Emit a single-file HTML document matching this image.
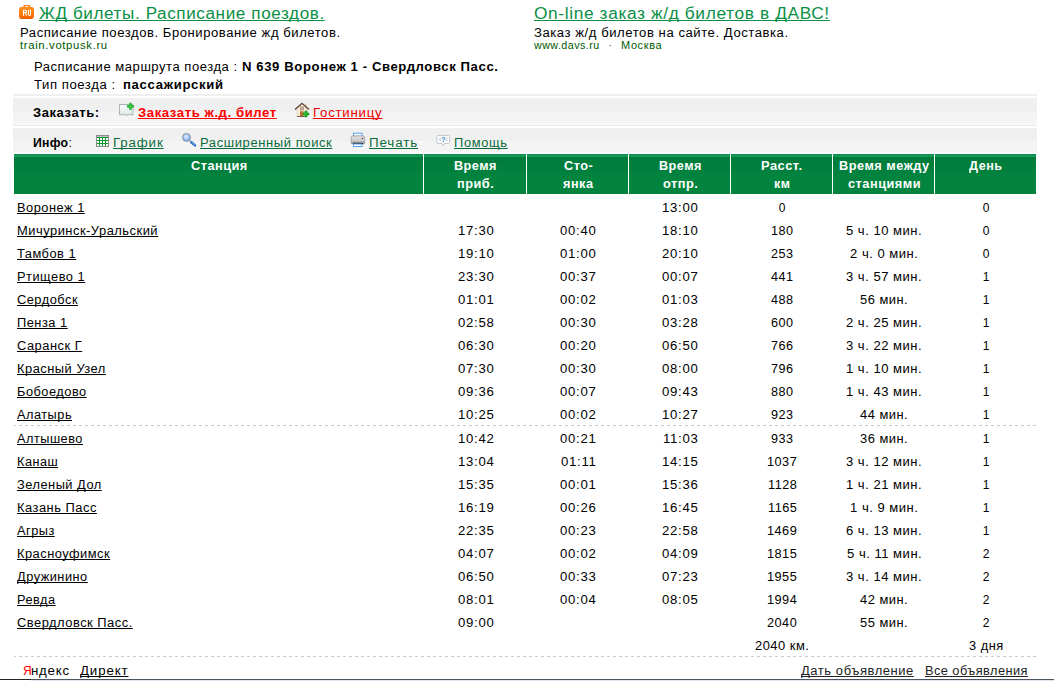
<!DOCTYPE html>
<html><head><meta charset="utf-8"><title>Расписание поезда</title>
<style>
html,body{margin:0;padding:0;background:#fff;width:1054px;height:682px;overflow:hidden;position:relative}
body{font-family:"Liberation Sans",sans-serif;color:#000}
.t{position:absolute;white-space:nowrap;line-height:normal;transform-origin:0 0;text-decoration-skip-ink:none}
.b{position:absolute}
</style></head><body>
<!-- RU icon -->
<svg class="b" style="left:18px;top:4px" width="18" height="16" viewBox="0 0 18 16">
 <defs><linearGradient id="og" x1="0" y1="0" x2="0" y2="1"><stop offset="0" stop-color="#ff8c1c"/><stop offset="0.7" stop-color="#fb7608"/><stop offset="1" stop-color="#ee5a00"/></linearGradient></defs>
 <path d="M5.2 3.2L5.8 1h6.2l0.7 2.2h-1.6l-0.3-1H6.9l-0.2 1z" fill="#ff7a10"/>
 <rect x="1" y="3" width="15" height="12" rx="2.4" fill="url(#og)"/>
 <path d="M5.5 11.8V6.3H7.4Q8.5 6.3 8.5 7.5Q8.5 8.6 7.4 8.6H5.5M7.4 8.6L8.6 11.8M10.5 5.8V10.6Q10.5 11.5 11.5 11.5Q12.5 11.5 12.5 10.6V5.8" fill="none" stroke="#fff" stroke-width="1.1"/>
</svg>
<!-- bands -->
<div class="b" style="left:13px;top:94px;width:1024px;height:2px;background:#efefef"></div>
<div class="b" style="left:13px;top:98px;width:1024px;height:14px;background:#f0f0f0"></div>
<div class="b" style="left:13px;top:112px;width:1024px;height:11px;background:#f4f4f4"></div>
<div class="b" style="left:13px;top:123px;width:1024px;height:2px;background:#f7f7f7"></div>
<div class="b" style="left:13px;top:125px;width:1024px;height:1px;background:#eaeaea"></div>
<div class="b" style="left:13px;top:128px;width:1024px;height:13px;background:#f0f0f0"></div>
<div class="b" style="left:13px;top:141px;width:1024px;height:11px;background:#f4f4f4"></div>
<div class="b" style="left:13px;top:152px;width:1024px;height:1px;background:#f7f7f7"></div>
<!-- header -->
<div class="b" style="left:14px;top:154px;width:1022px;height:40px;background:linear-gradient(#0a8c47 0 1px,#16995a 1px 3px,#007b3b 3px,#02843f 60%,#02843f)"></div>
<div class="b" style="left:423px;top:154px;width:1px;height:40px;background:#fff"></div>
<div class="b" style="left:526px;top:154px;width:1px;height:40px;background:#fff"></div>
<div class="b" style="left:628px;top:154px;width:1px;height:40px;background:#fff"></div>
<div class="b" style="left:730px;top:154px;width:1px;height:40px;background:#fff"></div>
<div class="b" style="left:832px;top:154px;width:1px;height:40px;background:#fff"></div>
<div class="b" style="left:934px;top:154px;width:1px;height:40px;background:#fff"></div>
<!-- dashed lines -->
<div class="b" style="left:14px;top:425px;width:1022px;height:1px;background:repeating-linear-gradient(90deg,#c8c8c8 0 3px,transparent 3px 6px);background-position:-1px 0"></div>
<div class="b" style="left:14px;top:656px;width:1022px;height:1px;background:repeating-linear-gradient(90deg,#c8c8c8 0 3px,transparent 3px 6px);background-position:-1px 0"></div>
<!-- bottom line -->
<div class="b" style="left:0;top:679px;width:31px;height:1px;background:#262626"></div>
<div class="b" style="left:31px;top:679px;width:1023px;height:1px;background:#4b5661"></div>
<div class="b" style="left:31px;top:680px;width:1023px;height:1px;background:#dde5ee"></div>
<!-- ticket icon -->
<svg class="b" style="left:118px;top:102px" width="18" height="16" viewBox="0 0 18 16">
 <defs><linearGradient id="tg" x1="0" y1="0" x2="0" y2="1"><stop offset="0" stop-color="#fbfdfd"/><stop offset="1" stop-color="#dce6e6"/></linearGradient></defs>
 <path d="M1.5 2.5h13.5v10.3h-2.2q-1-1.3-2 0.3h-3.6q-1-1.6-2-0.3h-3.7z" fill="url(#tg)" stroke="#a2adaf" stroke-width="0.9"/>
 <path d="M11.6 1.2h1.7v2.3h2.3v1.7h-2.3v2.3h-1.7V5.2H9.3V3.5h2.3z" fill="#30d840" stroke="#139c22" stroke-width="0.7"/>
</svg>
<!-- house icon -->
<svg class="b" style="left:294px;top:102px" width="17" height="16" viewBox="0 0 17 16">
 <rect x="11" y="1.5" width="2" height="4" fill="#e8d0b0"/>
 <path d="M3 6.5L8 2.5L13 6.5V14.5H3z" fill="#f6ead8" stroke="#d8c0a0" stroke-width="0.5"/>
 <path d="M1 7.5L8 1.3L15 7.5" fill="none" stroke="#5a4535" stroke-width="1.3"/>
 <rect x="6.5" y="5" width="3" height="3" fill="#a8c4e0" stroke="#b87840" stroke-width="0.7"/>
 <rect x="6" y="9.3" width="3.5" height="5.2" fill="#c07035"/>
 <rect x="3" y="14" width="8" height="1" fill="#7a5a4a"/>
 <path d="M11 9h2v2h2v2h-2v2h-2v-2H9v-2h2z" fill="#22c030" stroke="#108a18" stroke-width="0.6"/>
</svg>
<!-- grid icon -->
<svg class="b" style="left:96px;top:135px" width="13" height="12" viewBox="0 0 13 12" shape-rendering="crispEdges">
 <rect x="0" y="0" width="13" height="12" fill="#8a8a8a"/>
 <rect x="1" y="1" width="11" height="1" fill="#c4bccc"/>
 <rect x="1" y="2" width="11" height="9" fill="#0a9a2a"/>
 <g fill="#fff">
  <rect x="1" y="3" width="2" height="2"/><rect x="4" y="3" width="2" height="2"/><rect x="7" y="3" width="2" height="2"/><rect x="10" y="3" width="2" height="2"/>
  <rect x="1" y="6" width="2" height="2"/><rect x="4" y="6" width="2" height="2"/><rect x="7" y="6" width="2" height="2"/><rect x="10" y="6" width="2" height="2"/>
  <rect x="1" y="9" width="2" height="2"/><rect x="4" y="9" width="2" height="2"/><rect x="7" y="9" width="2" height="2"/><rect x="10" y="9" width="2" height="2"/>
 </g>
</svg>
<!-- magnifier -->
<svg class="b" style="left:180px;top:131px" width="18" height="17" viewBox="0 0 18 17">
 <defs><radialGradient id="lg" cx="0.45" cy="0.4" r="0.6"><stop offset="0" stop-color="#e8f2ff"/><stop offset="0.5" stop-color="#a8ccff"/><stop offset="1" stop-color="#78aef8"/></radialGradient></defs>
 <line x1="9.6" y1="9.6" x2="11" y2="10.8" stroke="#a0a0a0" stroke-width="1.6"/>
 <line x1="11.3" y1="11.2" x2="15" y2="14.4" stroke="#3572cc" stroke-width="2.5" stroke-linecap="round"/>
 <line x1="11.8" y1="11.4" x2="14.4" y2="13.6" stroke="#7aa8ee" stroke-width="0.8" stroke-linecap="round"/>
 <circle cx="6.5" cy="6.4" r="3.9" fill="url(#lg)" stroke="#8c8c8c" stroke-width="1"/>
</svg>
<!-- printer -->
<svg class="b" style="left:350px;top:132px" width="16" height="16" viewBox="0 0 16 16">
 <defs><linearGradient id="pg" x1="0" y1="0" x2="0" y2="1"><stop offset="0" stop-color="#e4e4e4"/><stop offset="0.6" stop-color="#c8c8c8"/><stop offset="1" stop-color="#8a8a8a"/></linearGradient></defs>
 <rect x="3.5" y="1.2" width="8.5" height="3" fill="#fff" stroke="#5aa0ee" stroke-width="1"/>
 <rect x="1.2" y="4" width="13.5" height="8" rx="1.2" fill="url(#pg)" stroke="#8c8c8c" stroke-width="0.6"/>
 <rect x="3" y="10.8" width="10" height="1.2" fill="#222"/>
 <rect x="3.5" y="12" width="8.5" height="2.5" fill="#fff" stroke="#5aa0ee" stroke-width="1"/>
 <circle cx="12.5" cy="6.4" r="0.7" fill="#333"/>
</svg>
<!-- help bubble -->
<svg class="b" style="left:435.6px;top:134.3px" width="15" height="13" viewBox="0 0 15 13">
 <path d="M2 1.5h10.5q1.2 0 1.2 1.2v5.6q0 1.2-1.2 1.2H8.8L7.3 11.6L5.8 9.5H2q-1.2 0-1.2-1.2V2.7q0-1.2 1.2-1.2z" fill="#f8fafc" stroke="#c2cad2" stroke-width="1"/>
 <rect x="3" y="4" width="2" height="3" fill="#d8dde2"/><rect x="9.5" y="4" width="2" height="3" fill="#d8dde2"/>
 <text x="7.3" y="8.3" font-family="Liberation Sans" font-size="7.5" font-weight="700" fill="#4a8ed0" text-anchor="middle">?</text>
</svg>
<span class='t' style='left:39.40px;top:4.90px;font-size:16px;transform:scaleX(1.0691);color:#0a8f45;letter-spacing:0.56px;text-decoration:underline;'>ЖД билеты. Расписание поездов.</span>
<span class='t' style='left:19.70px;top:26.00px;font-size:12px;transform:scaleX(1.0882);letter-spacing:0.51px;'>Расписание поездов. Бронирование жд билетов.</span>
<span class='t' style='left:19.70px;top:40.40px;font-size:10px;transform:scaleX(1.1382);color:#005a00;letter-spacing:0.55px;'>train.votpusk.ru</span>
<span class='t' style='left:534.30px;top:4.50px;font-size:16px;transform:scaleX(1.0800);color:#0a8f45;letter-spacing:0.59px;text-decoration:underline;'>On-line заказ ж/д билетов в ДАВС!</span>
<span class='t' style='left:534.30px;top:25.50px;font-size:12px;transform:scaleX(1.0920);letter-spacing:0.50px;'>Заказ ж/д билетов на сайте. Доставка.</span>
<span class='t' style='left:534.30px;top:40.40px;font-size:10px;transform:scaleX(1.0746);color:#005a00;letter-spacing:0.39px;'>www.davs.ru</span>
<span class='t' style='left:608.50px;top:40.40px;font-size:10px;color:#005a00;'>·</span>
<span class='t' style='left:620.60px;top:40.40px;font-size:10px;transform:scaleX(1.0959);color:#005a00;letter-spacing:0.58px;'>Москва</span>
<span class='t' style='left:33.70px;top:59.80px;font-size:12px;transform:scaleX(1.0845);letter-spacing:0.50px;'>Расписание маршрута поезда :</span>
<span class='t' style='left:242.00px;top:59.80px;font-size:12px;transform:scaleX(1.0929);font-weight:700;letter-spacing:0.55px;'>N 639 Воронеж 1 - Свердловск Пасс.</span>
<span class='t' style='left:33.70px;top:77.70px;font-size:12px;transform:scaleX(1.0925);letter-spacing:0.52px;'>Тип поезда :</span>
<span class='t' style='left:123.40px;top:77.70px;font-size:12px;transform:scaleX(1.0910);font-weight:700;letter-spacing:0.64px;'>пассажирский</span>
<span class='t' style='left:33.20px;top:105.90px;font-size:12px;transform:scaleX(1.0830);font-weight:700;letter-spacing:0.53px;'>Заказать:</span>
<span class='t' style='left:138.00px;top:106.00px;font-size:12px;transform:scaleX(1.0912);font-weight:700;color:#ff0000;letter-spacing:0.54px;text-decoration:underline;'>Заказать ж.д. билет</span>
<span class='t' style='left:313.40px;top:106.00px;font-size:12px;transform:scaleX(1.1059);color:#ee0000;letter-spacing:0.67px;text-decoration:underline;'>Гостиницу</span>
<span class='t' style='left:33.20px;top:136.20px;font-size:12px;transform:scaleX(1.0223);font-weight:700;letter-spacing:0.24px;'>Инфо</span>
<span class='t' style='left:68.50px;top:136.20px;font-size:12px;'>:</span>
<span class='t' style='left:113.00px;top:136.20px;font-size:12px;transform:scaleX(1.1075);color:#0b6b3a;letter-spacing:0.78px;text-decoration:underline;'>График</span>
<span class='t' style='left:200.00px;top:136.20px;font-size:12px;transform:scaleX(1.0835);color:#0b6b3a;letter-spacing:0.54px;text-decoration:underline;'>Расширенный поиск</span>
<span class='t' style='left:369.00px;top:136.20px;font-size:12px;transform:scaleX(1.1134);color:#0b6b3a;letter-spacing:0.78px;text-decoration:underline;'>Печать</span>
<span class='t' style='left:454.00px;top:136.20px;font-size:12px;transform:scaleX(1.0732);color:#0b6b3a;letter-spacing:0.62px;text-decoration:underline;'>Помощь</span>
<span class='t' style='left:190.85px;top:158.90px;font-size:12px;transform:scaleX(1.0609);font-weight:700;color:#fff;letter-spacing:0.47px;'>Станция</span>
<span class='t' style='left:454.28px;top:158.90px;font-size:12px;transform:scaleX(1.0535);font-weight:700;color:#fff;letter-spacing:0.47px;'>Время</span>
<span class='t' style='left:457.12px;top:176.50px;font-size:12px;transform:scaleX(1.0631);font-weight:700;color:#fff;letter-spacing:0.47px;'>приб.</span>
<span class='t' style='left:563.61px;top:158.90px;font-size:12px;transform:scaleX(1.0607);font-weight:700;color:#fff;letter-spacing:0.47px;'>Сто-</span>
<span class='t' style='left:563.00px;top:176.50px;font-size:12px;transform:scaleX(1.0578);font-weight:700;color:#fff;letter-spacing:0.47px;'>янка</span>
<span class='t' style='left:658.78px;top:158.90px;font-size:12px;transform:scaleX(1.0535);font-weight:700;color:#fff;letter-spacing:0.47px;'>Время</span>
<span class='t' style='left:662.55px;top:176.50px;font-size:12px;transform:scaleX(1.0671);font-weight:700;color:#fff;letter-spacing:0.47px;'>отпр.</span>
<span class='t' style='left:761.45px;top:158.90px;font-size:12px;transform:scaleX(1.0714);font-weight:700;color:#fff;letter-spacing:0.47px;'>Расст.</span>
<span class='t' style='left:774.04px;top:176.50px;font-size:12px;transform:scaleX(1.0360);font-weight:700;color:#fff;letter-spacing:0.48px;'>км</span>
<span class='t' style='left:838.94px;top:158.90px;font-size:12px;transform:scaleX(1.0632);font-weight:700;color:#fff;letter-spacing:0.47px;'>Время между</span>
<span class='t' style='left:847.73px;top:176.50px;font-size:12px;transform:scaleX(1.0630);font-weight:700;color:#fff;letter-spacing:0.47px;'>станциями</span>
<span class='t' style='left:969.47px;top:158.90px;font-size:12px;transform:scaleX(1.0517);font-weight:700;color:#fff;letter-spacing:0.48px;'>День</span>
<span class='t' style='left:17.20px;top:200.60px;font-size:12px;transform:scaleX(1.0687);letter-spacing:0.47px;text-decoration:underline;'>Воронеж 1</span>
<span class='t' style='left:662.14px;top:200.60px;font-size:12px;transform:scaleX(1.0964);letter-spacing:0.64px;'>13:00</span>
<span class='t' style='left:778.66px;top:200.60px;font-size:12px;'>0</span>
<span class='t' style='left:982.66px;top:200.60px;font-size:12px;'>0</span>
<span class='t' style='left:17.20px;top:223.60px;font-size:12px;transform:scaleX(1.0741);letter-spacing:0.47px;text-decoration:underline;'>Мичуринск-Уральский</span>
<span class='t' style='left:457.64px;top:223.60px;font-size:12px;transform:scaleX(1.0964);letter-spacing:0.64px;'>17:30</span>
<span class='t' style='left:560.14px;top:223.60px;font-size:12px;transform:scaleX(1.0964);letter-spacing:0.64px;'>00:40</span>
<span class='t' style='left:662.14px;top:223.60px;font-size:12px;transform:scaleX(1.0964);letter-spacing:0.64px;'>18:10</span>
<span class='t' style='left:770.96px;top:223.60px;font-size:12px;transform:scaleX(1.0525);letter-spacing:0.48px;'>180</span>
<span class='t' style='left:846.19px;top:223.60px;font-size:12px;transform:scaleX(1.0866);letter-spacing:0.46px;'>5 ч. 10 мин.</span>
<span class='t' style='left:982.66px;top:223.60px;font-size:12px;'>0</span>
<span class='t' style='left:17.20px;top:246.60px;font-size:12px;transform:scaleX(1.0693);letter-spacing:0.47px;text-decoration:underline;'>Тамбов 1</span>
<span class='t' style='left:457.64px;top:246.60px;font-size:12px;transform:scaleX(1.0964);letter-spacing:0.64px;'>19:10</span>
<span class='t' style='left:560.14px;top:246.60px;font-size:12px;transform:scaleX(1.0964);letter-spacing:0.64px;'>01:00</span>
<span class='t' style='left:662.14px;top:246.60px;font-size:12px;transform:scaleX(1.0964);letter-spacing:0.64px;'>20:10</span>
<span class='t' style='left:770.96px;top:246.60px;font-size:12px;transform:scaleX(1.0525);letter-spacing:0.48px;'>253</span>
<span class='t' style='left:850.03px;top:246.60px;font-size:12px;transform:scaleX(1.0879);letter-spacing:0.46px;'>2 ч. 0 мин.</span>
<span class='t' style='left:982.66px;top:246.60px;font-size:12px;'>0</span>
<span class='t' style='left:17.20px;top:269.60px;font-size:12px;transform:scaleX(1.0683);letter-spacing:0.47px;text-decoration:underline;'>Ртищево 1</span>
<span class='t' style='left:457.64px;top:269.60px;font-size:12px;transform:scaleX(1.0964);letter-spacing:0.64px;'>23:30</span>
<span class='t' style='left:560.14px;top:269.60px;font-size:12px;transform:scaleX(1.0964);letter-spacing:0.64px;'>00:37</span>
<span class='t' style='left:662.14px;top:269.60px;font-size:12px;transform:scaleX(1.0964);letter-spacing:0.64px;'>00:07</span>
<span class='t' style='left:770.96px;top:269.60px;font-size:12px;transform:scaleX(1.0525);letter-spacing:0.48px;'>441</span>
<span class='t' style='left:846.19px;top:269.60px;font-size:12px;transform:scaleX(1.0866);letter-spacing:0.46px;'>3 ч. 57 мин.</span>
<span class='t' style='left:982.66px;top:269.60px;font-size:12px;'>1</span>
<span class='t' style='left:17.20px;top:292.60px;font-size:12px;transform:scaleX(1.0668);letter-spacing:0.47px;text-decoration:underline;'>Сердобск</span>
<span class='t' style='left:457.64px;top:292.60px;font-size:12px;transform:scaleX(1.0964);letter-spacing:0.64px;'>01:01</span>
<span class='t' style='left:560.14px;top:292.60px;font-size:12px;transform:scaleX(1.0964);letter-spacing:0.64px;'>00:02</span>
<span class='t' style='left:662.14px;top:292.60px;font-size:12px;transform:scaleX(1.0964);letter-spacing:0.64px;'>01:03</span>
<span class='t' style='left:770.96px;top:292.60px;font-size:12px;transform:scaleX(1.0525);letter-spacing:0.48px;'>488</span>
<span class='t' style='left:860.16px;top:292.60px;font-size:12px;transform:scaleX(1.0739);letter-spacing:0.47px;'>56 мин.</span>
<span class='t' style='left:982.66px;top:292.60px;font-size:12px;'>1</span>
<span class='t' style='left:17.20px;top:315.60px;font-size:12px;transform:scaleX(1.0696);letter-spacing:0.47px;text-decoration:underline;'>Пенза 1</span>
<span class='t' style='left:457.64px;top:315.60px;font-size:12px;transform:scaleX(1.0964);letter-spacing:0.64px;'>02:58</span>
<span class='t' style='left:560.14px;top:315.60px;font-size:12px;transform:scaleX(1.0964);letter-spacing:0.64px;'>00:30</span>
<span class='t' style='left:662.14px;top:315.60px;font-size:12px;transform:scaleX(1.0964);letter-spacing:0.64px;'>03:28</span>
<span class='t' style='left:770.96px;top:315.60px;font-size:12px;transform:scaleX(1.0525);letter-spacing:0.48px;'>600</span>
<span class='t' style='left:846.19px;top:315.60px;font-size:12px;transform:scaleX(1.0866);letter-spacing:0.46px;'>2 ч. 25 мин.</span>
<span class='t' style='left:982.66px;top:315.60px;font-size:12px;'>1</span>
<span class='t' style='left:17.20px;top:338.60px;font-size:12px;transform:scaleX(1.0720);letter-spacing:0.47px;text-decoration:underline;'>Саранск Г</span>
<span class='t' style='left:457.64px;top:338.60px;font-size:12px;transform:scaleX(1.0964);letter-spacing:0.64px;'>06:30</span>
<span class='t' style='left:560.14px;top:338.60px;font-size:12px;transform:scaleX(1.0964);letter-spacing:0.64px;'>00:20</span>
<span class='t' style='left:662.14px;top:338.60px;font-size:12px;transform:scaleX(1.0964);letter-spacing:0.64px;'>06:50</span>
<span class='t' style='left:770.96px;top:338.60px;font-size:12px;transform:scaleX(1.0525);letter-spacing:0.48px;'>766</span>
<span class='t' style='left:846.19px;top:338.60px;font-size:12px;transform:scaleX(1.0866);letter-spacing:0.46px;'>3 ч. 22 мин.</span>
<span class='t' style='left:982.66px;top:338.60px;font-size:12px;'>1</span>
<span class='t' style='left:17.20px;top:361.60px;font-size:12px;transform:scaleX(1.0721);letter-spacing:0.47px;text-decoration:underline;'>Красный Узел</span>
<span class='t' style='left:457.64px;top:361.60px;font-size:12px;transform:scaleX(1.0964);letter-spacing:0.64px;'>07:30</span>
<span class='t' style='left:560.14px;top:361.60px;font-size:12px;transform:scaleX(1.0964);letter-spacing:0.64px;'>00:30</span>
<span class='t' style='left:662.14px;top:361.60px;font-size:12px;transform:scaleX(1.0964);letter-spacing:0.64px;'>08:00</span>
<span class='t' style='left:770.96px;top:361.60px;font-size:12px;transform:scaleX(1.0525);letter-spacing:0.48px;'>796</span>
<span class='t' style='left:846.19px;top:361.60px;font-size:12px;transform:scaleX(1.0866);letter-spacing:0.46px;'>1 ч. 10 мин.</span>
<span class='t' style='left:982.66px;top:361.60px;font-size:12px;'>1</span>
<span class='t' style='left:17.20px;top:384.60px;font-size:12px;transform:scaleX(1.0665);letter-spacing:0.47px;text-decoration:underline;'>Бобоедово</span>
<span class='t' style='left:457.64px;top:384.60px;font-size:12px;transform:scaleX(1.0964);letter-spacing:0.64px;'>09:36</span>
<span class='t' style='left:560.14px;top:384.60px;font-size:12px;transform:scaleX(1.0964);letter-spacing:0.64px;'>00:07</span>
<span class='t' style='left:662.14px;top:384.60px;font-size:12px;transform:scaleX(1.0964);letter-spacing:0.64px;'>09:43</span>
<span class='t' style='left:770.96px;top:384.60px;font-size:12px;transform:scaleX(1.0525);letter-spacing:0.48px;'>880</span>
<span class='t' style='left:846.19px;top:384.60px;font-size:12px;transform:scaleX(1.0866);letter-spacing:0.46px;'>1 ч. 43 мин.</span>
<span class='t' style='left:982.66px;top:384.60px;font-size:12px;'>1</span>
<span class='t' style='left:17.20px;top:407.60px;font-size:12px;transform:scaleX(1.0632);letter-spacing:0.47px;text-decoration:underline;'>Алатырь</span>
<span class='t' style='left:457.64px;top:407.60px;font-size:12px;transform:scaleX(1.0964);letter-spacing:0.64px;'>10:25</span>
<span class='t' style='left:560.14px;top:407.60px;font-size:12px;transform:scaleX(1.0964);letter-spacing:0.64px;'>00:02</span>
<span class='t' style='left:662.14px;top:407.60px;font-size:12px;transform:scaleX(1.0964);letter-spacing:0.64px;'>10:27</span>
<span class='t' style='left:770.96px;top:407.60px;font-size:12px;transform:scaleX(1.0525);letter-spacing:0.48px;'>923</span>
<span class='t' style='left:860.16px;top:407.60px;font-size:12px;transform:scaleX(1.0739);letter-spacing:0.47px;'>44 мин.</span>
<span class='t' style='left:982.66px;top:407.60px;font-size:12px;'>1</span>
<span class='t' style='left:17.20px;top:431.60px;font-size:12px;transform:scaleX(1.0610);letter-spacing:0.47px;text-decoration:underline;'>Алтышево</span>
<span class='t' style='left:457.64px;top:431.60px;font-size:12px;transform:scaleX(1.0964);letter-spacing:0.64px;'>10:42</span>
<span class='t' style='left:560.14px;top:431.60px;font-size:12px;transform:scaleX(1.0964);letter-spacing:0.64px;'>00:21</span>
<span class='t' style='left:662.58px;top:431.60px;font-size:12px;transform:scaleX(1.0995);letter-spacing:0.64px;'>11:03</span>
<span class='t' style='left:770.96px;top:431.60px;font-size:12px;transform:scaleX(1.0525);letter-spacing:0.48px;'>933</span>
<span class='t' style='left:860.16px;top:431.60px;font-size:12px;transform:scaleX(1.0739);letter-spacing:0.47px;'>36 мин.</span>
<span class='t' style='left:982.66px;top:431.60px;font-size:12px;'>1</span>
<span class='t' style='left:17.20px;top:454.60px;font-size:12px;transform:scaleX(1.0562);letter-spacing:0.47px;text-decoration:underline;'>Канаш</span>
<span class='t' style='left:457.64px;top:454.60px;font-size:12px;transform:scaleX(1.0964);letter-spacing:0.64px;'>13:04</span>
<span class='t' style='left:560.58px;top:454.60px;font-size:12px;transform:scaleX(1.0995);letter-spacing:0.64px;'>01:11</span>
<span class='t' style='left:662.14px;top:454.60px;font-size:12px;transform:scaleX(1.0964);letter-spacing:0.64px;'>14:15</span>
<span class='t' style='left:767.12px;top:454.60px;font-size:12px;transform:scaleX(1.0584);letter-spacing:0.47px;'>1037</span>
<span class='t' style='left:846.19px;top:454.60px;font-size:12px;transform:scaleX(1.0866);letter-spacing:0.46px;'>3 ч. 12 мин.</span>
<span class='t' style='left:982.66px;top:454.60px;font-size:12px;'>1</span>
<span class='t' style='left:17.20px;top:477.60px;font-size:12px;transform:scaleX(1.0683);letter-spacing:0.47px;text-decoration:underline;'>Зеленый Дол</span>
<span class='t' style='left:457.64px;top:477.60px;font-size:12px;transform:scaleX(1.0964);letter-spacing:0.64px;'>15:35</span>
<span class='t' style='left:560.14px;top:477.60px;font-size:12px;transform:scaleX(1.0964);letter-spacing:0.64px;'>00:01</span>
<span class='t' style='left:662.14px;top:477.60px;font-size:12px;transform:scaleX(1.0964);letter-spacing:0.64px;'>15:36</span>
<span class='t' style='left:767.56px;top:477.60px;font-size:12px;transform:scaleX(1.0605);letter-spacing:0.47px;'>1128</span>
<span class='t' style='left:846.19px;top:477.60px;font-size:12px;transform:scaleX(1.0866);letter-spacing:0.46px;'>1 ч. 21 мин.</span>
<span class='t' style='left:982.66px;top:477.60px;font-size:12px;'>1</span>
<span class='t' style='left:17.20px;top:500.60px;font-size:12px;transform:scaleX(1.0733);letter-spacing:0.47px;text-decoration:underline;'>Казань Пасс</span>
<span class='t' style='left:457.64px;top:500.60px;font-size:12px;transform:scaleX(1.0964);letter-spacing:0.64px;'>16:19</span>
<span class='t' style='left:560.14px;top:500.60px;font-size:12px;transform:scaleX(1.0964);letter-spacing:0.64px;'>00:26</span>
<span class='t' style='left:662.14px;top:500.60px;font-size:12px;transform:scaleX(1.0964);letter-spacing:0.64px;'>16:45</span>
<span class='t' style='left:767.56px;top:500.60px;font-size:12px;transform:scaleX(1.0605);letter-spacing:0.47px;'>1165</span>
<span class='t' style='left:850.03px;top:500.60px;font-size:12px;transform:scaleX(1.0879);letter-spacing:0.46px;'>1 ч. 9 мин.</span>
<span class='t' style='left:982.66px;top:500.60px;font-size:12px;'>1</span>
<span class='t' style='left:17.20px;top:523.60px;font-size:12px;transform:scaleX(1.0621);letter-spacing:0.47px;text-decoration:underline;'>Агрыз</span>
<span class='t' style='left:457.64px;top:523.60px;font-size:12px;transform:scaleX(1.0964);letter-spacing:0.64px;'>22:35</span>
<span class='t' style='left:560.14px;top:523.60px;font-size:12px;transform:scaleX(1.0964);letter-spacing:0.64px;'>00:23</span>
<span class='t' style='left:662.14px;top:523.60px;font-size:12px;transform:scaleX(1.0964);letter-spacing:0.64px;'>22:58</span>
<span class='t' style='left:767.12px;top:523.60px;font-size:12px;transform:scaleX(1.0584);letter-spacing:0.47px;'>1469</span>
<span class='t' style='left:846.19px;top:523.60px;font-size:12px;transform:scaleX(1.0866);letter-spacing:0.46px;'>6 ч. 13 мин.</span>
<span class='t' style='left:982.66px;top:523.60px;font-size:12px;'>1</span>
<span class='t' style='left:17.20px;top:546.60px;font-size:12px;transform:scaleX(1.0684);letter-spacing:0.47px;text-decoration:underline;'>Красноуфимск</span>
<span class='t' style='left:457.64px;top:546.60px;font-size:12px;transform:scaleX(1.0964);letter-spacing:0.64px;'>04:07</span>
<span class='t' style='left:560.14px;top:546.60px;font-size:12px;transform:scaleX(1.0964);letter-spacing:0.64px;'>00:02</span>
<span class='t' style='left:662.14px;top:546.60px;font-size:12px;transform:scaleX(1.0964);letter-spacing:0.64px;'>04:09</span>
<span class='t' style='left:767.12px;top:546.60px;font-size:12px;transform:scaleX(1.0584);letter-spacing:0.47px;'>1815</span>
<span class='t' style='left:846.64px;top:546.60px;font-size:12px;transform:scaleX(1.0878);letter-spacing:0.46px;'>5 ч. 11 мин.</span>
<span class='t' style='left:982.66px;top:546.60px;font-size:12px;'>2</span>
<span class='t' style='left:17.20px;top:569.60px;font-size:12px;transform:scaleX(1.0654);letter-spacing:0.47px;text-decoration:underline;'>Дружинино</span>
<span class='t' style='left:457.64px;top:569.60px;font-size:12px;transform:scaleX(1.0964);letter-spacing:0.64px;'>06:50</span>
<span class='t' style='left:560.14px;top:569.60px;font-size:12px;transform:scaleX(1.0964);letter-spacing:0.64px;'>00:33</span>
<span class='t' style='left:662.14px;top:569.60px;font-size:12px;transform:scaleX(1.0964);letter-spacing:0.64px;'>07:23</span>
<span class='t' style='left:767.12px;top:569.60px;font-size:12px;transform:scaleX(1.0584);letter-spacing:0.47px;'>1955</span>
<span class='t' style='left:846.19px;top:569.60px;font-size:12px;transform:scaleX(1.0866);letter-spacing:0.46px;'>3 ч. 14 мин.</span>
<span class='t' style='left:982.66px;top:569.60px;font-size:12px;'>2</span>
<span class='t' style='left:17.20px;top:592.60px;font-size:12px;transform:scaleX(1.0605);letter-spacing:0.47px;text-decoration:underline;'>Ревда</span>
<span class='t' style='left:457.64px;top:592.60px;font-size:12px;transform:scaleX(1.0964);letter-spacing:0.64px;'>08:01</span>
<span class='t' style='left:560.14px;top:592.60px;font-size:12px;transform:scaleX(1.0964);letter-spacing:0.64px;'>00:04</span>
<span class='t' style='left:662.14px;top:592.60px;font-size:12px;transform:scaleX(1.0964);letter-spacing:0.64px;'>08:05</span>
<span class='t' style='left:767.12px;top:592.60px;font-size:12px;transform:scaleX(1.0584);letter-spacing:0.47px;'>1994</span>
<span class='t' style='left:860.16px;top:592.60px;font-size:12px;transform:scaleX(1.0739);letter-spacing:0.47px;'>42 мин.</span>
<span class='t' style='left:982.66px;top:592.60px;font-size:12px;'>2</span>
<span class='t' style='left:17.20px;top:615.60px;font-size:12px;transform:scaleX(1.0756);letter-spacing:0.46px;text-decoration:underline;'>Свердловск Пасс.</span>
<span class='t' style='left:457.64px;top:615.60px;font-size:12px;transform:scaleX(1.0964);letter-spacing:0.64px;'>09:00</span>
<span class='t' style='left:767.12px;top:615.60px;font-size:12px;transform:scaleX(1.0584);letter-spacing:0.47px;'>2040</span>
<span class='t' style='left:860.16px;top:615.60px;font-size:12px;transform:scaleX(1.0739);letter-spacing:0.47px;'>55 мин.</span>
<span class='t' style='left:982.66px;top:615.60px;font-size:12px;'>2</span>
<span class='t' style='left:755.02px;top:638.60px;font-size:12px;transform:scaleX(1.0763);letter-spacing:0.46px;'>2040 км.</span>
<span class='t' style='left:968.90px;top:638.60px;font-size:12px;transform:scaleX(1.0686);letter-spacing:0.47px;'>3 дня</span>
<span class='t' style='left:23.00px;top:663.70px;font-size:12px;color:#ff0000;'>Я</span>
<span class='t' style='left:31.00px;top:663.70px;font-size:12px;transform:scaleX(1.1029);letter-spacing:0.72px;'>ндекс</span>
<span class='t' style='left:80.00px;top:663.70px;font-size:12px;transform:scaleX(1.1108);letter-spacing:0.76px;text-decoration:underline;'>Директ</span>
<span class='t' style='left:801.00px;top:663.80px;font-size:12px;transform:scaleX(1.0819);color:#222;letter-spacing:0.52px;text-decoration:underline;'>Дать объявление</span>
<span class='t' style='left:925.00px;top:663.80px;font-size:12px;transform:scaleX(1.0648);color:#222;letter-spacing:0.42px;text-decoration:underline;'>Все объявления</span>
</body></html>
